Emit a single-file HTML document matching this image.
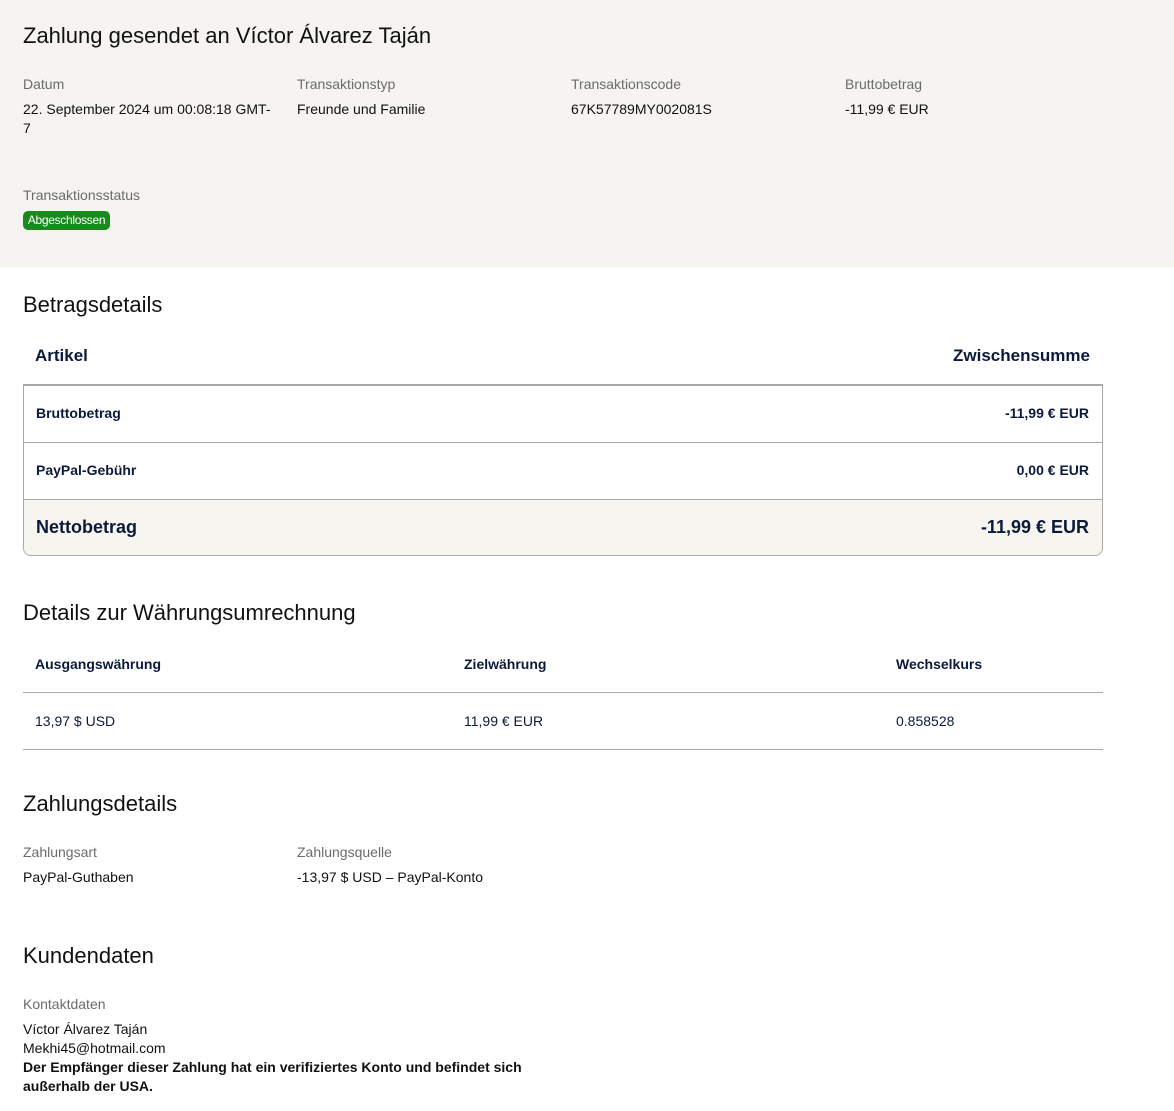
<!DOCTYPE html>
<html><head><meta charset="utf-8">
<style>
*{margin:0;padding:0;box-sizing:border-box}
body{width:1174px;height:1111px;background:#fff;font-family:"Liberation Sans",Arial,sans-serif;color:#111;position:relative;overflow:hidden}
.a{position:absolute;white-space:nowrap;line-height:1}
.top{position:absolute;left:0;top:0;width:1174px;height:267px;background:#f5f4f0}
.h1{font-size:22px;color:#111}
.lbl{font-size:14px;color:#6b6b6b}
.val{font-size:14px;color:#111}
.nv{color:#0b1a3a}
.b{font-weight:bold}
.line{position:absolute;height:1px;background:#a8a8a8}
</style></head><body>
<div class="top"></div>
<div class="a h1" style="left:23px;top:25px">Zahlung gesendet an Víctor Álvarez Taján</div>
<div class="a lbl" style="left:23px;top:77px">Datum</div>
<div class="a lbl" style="left:297px;top:77px">Transaktionstyp</div>
<div class="a lbl" style="left:571px;top:77px">Transaktionscode</div>
<div class="a lbl" style="left:845px;top:77px">Bruttobetrag</div>
<div class="a val" style="left:23px;top:102px">22. September 2024 um 00:08:18 GMT-</div>
<div class="a val" style="left:23px;top:121px">7</div>
<div class="a val" style="left:297px;top:102px">Freunde und Familie</div>
<div class="a val" style="left:571px;top:102px">67K57789MY002081S</div>
<div class="a val" style="left:845px;top:102px">-11,99 € EUR</div>
<div class="a lbl" style="left:23px;top:188px">Transaktionsstatus</div>
<div class="a" style="left:23px;top:211px;width:87px;height:19px;background:#198a1c;border-radius:5px;color:#fff;font-size:12px;line-height:19px;text-align:center;letter-spacing:-0.3px">Abgeschlossen</div>

<div class="a h1" style="left:23px;top:294px">Betragsdetails</div>
<div class="a nv b" style="left:35px;top:347px;font-size:17px">Artikel</div>
<div class="a nv b" style="right:84px;top:347px;font-size:17px">Zwischensumme</div>
<div style="position:absolute;left:23px;top:384px;width:1080px;height:172px;border:1px solid #a8a8a8;border-top:2px solid #a8a8a8;border-radius:0 0 8px 8px;overflow:hidden">
 <div style="height:57px;border-bottom:1px solid #a8a8a8;position:relative"></div>
 <div style="height:57px;border-bottom:1px solid #a8a8a8"></div>
 <div style="height:56px;background:#f7f5f0"></div>
</div>
<div class="a nv b" style="left:36px;top:406px;font-size:14px">Bruttobetrag</div>
<div class="a nv b" style="right:85px;top:406px;font-size:14px">-11,99 € EUR</div>
<div class="a nv b" style="left:36px;top:463px;font-size:14px">PayPal-Gebühr</div>
<div class="a nv b" style="right:85px;top:463px;font-size:14px">0,00 € EUR</div>
<div class="a nv b" style="left:36px;top:518px;font-size:18px">Nettobetrag</div>
<div class="a nv b" style="right:85px;top:518px;font-size:18px">-11,99 € EUR</div>

<div class="a h1" style="left:23px;top:602px">Details zur Währungsumrechnung</div>
<div class="a nv b" style="left:35px;top:657px;font-size:14px">Ausgangswährung</div>
<div class="a nv b" style="left:464px;top:657px;font-size:14px">Zielwährung</div>
<div class="a nv b" style="left:896px;top:657px;font-size:14px">Wechselkurs</div>
<div class="line" style="left:23px;top:692px;width:1080px"></div>
<div class="a nv" style="left:35px;top:714px;font-size:14px">13,97 $ USD</div>
<div class="a nv" style="left:464px;top:714px;font-size:14px">11,99 € EUR</div>
<div class="a nv" style="left:896px;top:714px;font-size:14px">0.858528</div>
<div class="line" style="left:23px;top:749px;width:1080px"></div>

<div class="a h1" style="left:23px;top:793px">Zahlungsdetails</div>
<div class="a lbl" style="left:23px;top:845px">Zahlungsart</div>
<div class="a lbl" style="left:297px;top:845px">Zahlungsquelle</div>
<div class="a val" style="left:23px;top:870px">PayPal-Guthaben</div>
<div class="a val" style="left:297px;top:870px">-13,97 $ USD – PayPal-Konto</div>

<div class="a h1" style="left:23px;top:945px">Kundendaten</div>
<div class="a lbl" style="left:23px;top:997px">Kontaktdaten</div>
<div class="a val" style="left:23px;top:1022px">Víctor Álvarez Taján</div>
<div class="a val" style="left:23px;top:1041px">Mekhi45@hotmail.com</div>
<div class="a val b" style="left:23px;top:1060px">Der Empfänger dieser Zahlung hat ein verifiziertes Konto und befindet sich</div>
<div class="a val b" style="left:23px;top:1079px">außerhalb der USA.</div>
</body></html>
